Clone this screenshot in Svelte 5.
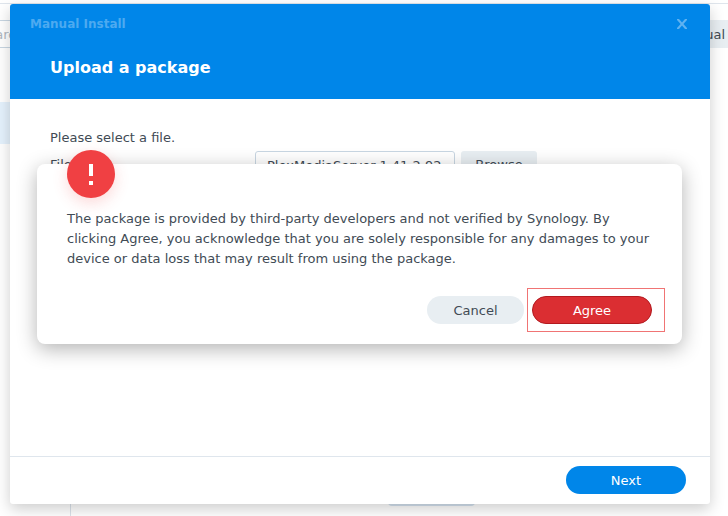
<script>
  let fileName = $state("PlexMediaServer-1.41.2.92");
</script>

<div class="page">
  <div class="desktop">
    <div class="topbar"></div>
    <div class="package-center">
      <aside class="sidebar">
        <input class="search" type="text" placeholder="Search" aria-label="Search" />
        <div class="selected-item"></div>
      </aside>
      <main class="packages">
        <button class="manual-install" type="button">Manual</button>
        <div class="package-button"></div>
      </main>
    </div>
  </div>

  <section class="wizard">
    <header class="wizard-header">
      <div class="title-bar">
        <span class="window-title">Manual Install</span>
        <button class="close" type="button" aria-label="Close">
          <svg viewBox="0 0 12 12" width="12" height="12">
            <path d="M1 1h2L6 4.6 9 1h2v1L7.4 6 11 10v1H9L6 7.4 3 11H1v-1L4.6 6 1 2z" />
          </svg>
        </button>
      </div>
      <h1>Upload a package</h1>
    </header>

    <div class="wizard-body">
      <p>Please select a file.</p>
      <div class="file-row">
        <label for="file">File:</label>
        <input id="file" type="text" bind:value={fileName} />
        <button class="browse" type="button">Browse</button>
      </div>
    </div>

    <footer class="wizard-footer">
      <button class="pill next" type="button">Next</button>
    </footer>
  </section>

  <div class="alert" role="alertdialog" aria-describedby="alert-text">
    <div class="alert-icon">
      <svg viewBox="0 0 48 48" width="48" height="48">
        <path d="M22 14h4v12h-4zM22 31h4v4h-4z" />
      </svg>
    </div>
    <p id="alert-text">
      The package is provided by third-party developers and not verified by
      Synology. By clicking Agree, you acknowledge that you are solely
      responsible for any damages to your device or data loss that may result
      from using the package.
    </p>
    <div class="alert-actions">
      <button class="pill cancel" type="button">Cancel</button>
      <div class="highlight">
        <button class="pill agree" type="button">Agree</button>
      </div>
    </div>
  </div>
</div>

<style>
  :global(body) {
    margin: 0;
  }

  .page {
    position: relative;
    min-height: 100vh;
    overflow: hidden;
    background-color: #fff;
    color: #414b55;
    font-family: Verdana, "DejaVu Sans", sans-serif;
    font-size: 13px;
    line-height: 20px;
  }

  button,
  input {
    box-sizing: border-box;
    margin: 0;
    font: inherit;
    color: inherit;
  }

  button {
    border: none;
    cursor: pointer;
  }

  /* Package Center behind the wizard */
  .desktop {
    display: flex;
    flex-direction: column;
    height: 100vh;
  }

  .topbar {
    height: 3px;
    border-bottom: 1px solid #dfe5ec;
  }

  .package-center {
    display: flex;
    flex: 1;
  }

  .sidebar {
    width: 70px;
    border-right: 1px solid #dbe3eb;
    padding-top: 16px;
  }

  .search {
    display: block;
    width: 100px;
    height: 28px;
    margin-left: -40px;
    padding: 0 18px;
    border: 1px solid #c8d6e2;
  }

  .search::placeholder {
    color: #b0b8c0;
    opacity: 1;
  }

  .selected-item {
    height: 42px;
    margin-top: 54px;
    background-color: #e5f2fd;
  }

  .packages {
    display: flex;
    flex: 1;
    flex-direction: column;
    justify-content: space-between;
    padding-top: 16px;
    padding-bottom: 10px;
  }

  .manual-install {
    align-self: flex-end;
    height: 28px;
    padding: 2px 3px 0 12px;
    background-color: #e8eef2;
    white-space: nowrap;
  }

  .package-button {
    align-self: center;
    width: 87px;
    height: 28px;
    margin-left: 64px;
    border-radius: 4px;
    background-color: #d5e3f0;
  }

  /* Manual install wizard */
  .wizard {
    position: absolute;
    inset: 4px 18px 12px 10px;
    display: flex;
    flex-direction: column;
    overflow: hidden;
    border-radius: 3px;
    background-color: #fff;
    box-shadow: 0 5px 15px rgba(0, 0, 0, 0.2);
  }

  .wizard-header {
    padding: 10px 20px 21px;
    background-color: #0086e9;
    color: #fff;
  }

  .title-bar {
    display: flex;
    align-items: center;
    justify-content: space-between;
    color: #4daaf0;
  }

  .window-title {
    font-size: 12px;
    font-weight: bold;
  }

  .close {
    display: flex;
    padding: 0 2px;
    background: none;
  }

  .close svg {
    fill: #5fb2f1;
  }

  h1 {
    margin: 24px 20px 0;
    font-size: 16px;
    font-weight: bold;
    line-height: 20px;
  }

  .wizard-body {
    flex: 1;
    padding: 29px 40px;
  }

  .wizard-body p {
    margin: 0 0 3px;
  }

  .file-row {
    display: flex;
    align-items: center;
    gap: 6px;
  }

  .file-row label {
    width: 199px;
  }

  .file-row input {
    width: 200px;
    height: 28px;
    padding: 0 11px;
    border: 1px solid #c8d6e2;
    border-radius: 3px;
  }

  .browse {
    width: 76px;
    height: 28px;
    padding: 0;
    border-radius: 3px;
    background-color: #e8eef2;
  }

  .wizard-footer {
    display: flex;
    justify-content: flex-end;
    padding: 9px 24px 10px;
    border-top: 1px solid #dfe6ed;
  }

  .pill {
    height: 28px;
    padding: 2px 0 0;
    border-radius: 14px;
  }

  .next {
    width: 120px;
    background-color: #0086e9;
    color: #fff;
  }

  /* Third-party warning */
  .alert {
    position: absolute;
    top: 164px;
    right: 46px;
    left: 37px;
    box-sizing: border-box;
    padding: 45px 17px 12px 30px;
    border-radius: 8px;
    background-color: #fff;
    box-shadow: 0 5px 20px rgba(0, 0, 0, 0.3);
  }

  .alert-icon {
    position: absolute;
    top: -14px;
    left: 30px;
    width: 48px;
    height: 48px;
    border-radius: 50%;
    background-color: #f04043;
    box-shadow: 0 5px 15px rgba(240, 64, 67, 0.2);
  }

  .alert-icon svg {
    fill: #fff;
  }

  .alert p {
    margin: 0 13px 19px 0;
  }

  .alert-actions {
    display: flex;
    align-items: center;
    justify-content: flex-end;
    gap: 3px;
  }

  .cancel {
    width: 97px;
    background-color: #e8eef2;
  }

  .highlight {
    padding: 7px 12px 7px 4px;
    border: 1px solid #f07474;
  }

  .agree {
    display: block;
    width: 120px;
    border: 1px solid #b3191f;
    background-color: #db2e32;
    color: #fff;
  }
</style>
